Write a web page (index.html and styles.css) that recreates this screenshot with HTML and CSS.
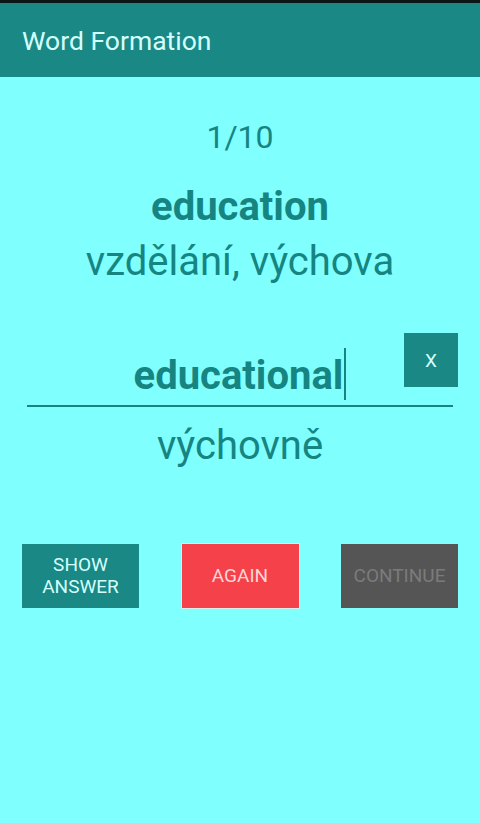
FILE: index.html
```html
<!DOCTYPE html>
<html lang="cs">
<head>
<meta charset="utf-8">
<title>Word Formation</title>
<link rel="stylesheet" href="styles.css">
</head>
<body>
<div class="status"></div>
<header class="appbar">Word Formation</header>
<main class="content">
  <div class="counter">1/10</div>
  <div class="word">education</div>
  <div class="translation">vzdělání, výchova</div>
  <div class="field">
    <div class="input"><span class="typed">educational</span><span class="caret"></span></div>
    <button class="clear">X</button>
  </div>
  <div class="translation second">výchovně</div>
  <div class="actions">
    <button class="btn btn-show">Show<br>answer</button>
    <button class="btn btn-again">Again</button>
    <button class="btn btn-continue">Continue</button>
  </div>
</main>
</body>
</html>
```
FILE: styles.css
```css
html, body {
  margin: 0;
  padding: 0;
}
body {
  width: 480px;
  height: 823px;
  background: #80ffff;
  font-family: Roboto, "Noto Sans", "Liberation Sans", sans-serif;
  overflow: hidden;
}
.status {
  height: 3px;
  background: #0b1717;
}
.appbar {
  height: 74px;
  background: #1a8884;
  color: #d4ffff;
  font-size: 26.5px;
  display: flex;
  align-items: center;
  padding-left: 22px;
}
.content {
  text-align: center;
  color: #168581;
}
.counter {
  font-size: 32px;
  line-height: 36px;
  margin-top: 42px;
}
.word {
  font-size: 40px;
  font-weight: bold;
  line-height: 44px;
  margin-top: 30px;
}
.translation {
  font-size: 40px;
  line-height: 44px;
  margin-top: 11px;
}
.field {
  position: relative;
  margin: 68px 22px 0;
}
.input {
  margin: 0 5px;
  font-size: 40px;
  font-weight: bold;
  line-height: 44px;
  padding-bottom: 5px;
  border-bottom: 2px solid #168581;
  display: flex;
  justify-content: center;
  align-items: center;
}
.caret {
  display: inline-block;
  width: 2px;
  height: 52px;
  background: #168581;
  margin-left: 1px;
  margin-top: -4px;
}
.clear {
  position: absolute;
  top: -19px;
  right: 0;
  width: 54px;
  height: 54px;
  border: 0;
  background: #1a8884;
  color: #d4ffff;
  font-family: Roboto, "Noto Sans", sans-serif;
  font-size: 19px;
  padding: 0;
}
.translation.second {
  margin-top: 17px;
}
.actions {
  display: flex;
  justify-content: space-between;
  padding: 0 22px;
  margin-top: 76px;
}
.btn {
  width: 117px;
  height: 64px;
  border: 0;
  padding: 0;
  font-family: Roboto, "Noto Sans", sans-serif;
  font-size: 19px;
  line-height: 22px;
  text-transform: uppercase;
}
.btn-show {
  background: #1a8884;
  color: #d4ffff;
}
.btn-again {
  background: #f5414a;
  color: #ffd6d6;
  box-shadow: 0 0 0 1px #d8ecec;
}
.btn-continue {
  background: #555555;
  color: #7b7b7b;
}
```
